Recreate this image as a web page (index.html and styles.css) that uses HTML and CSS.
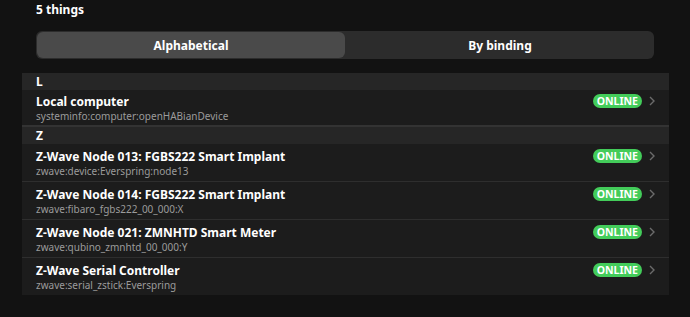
FILE: index.html
```html
<!DOCTYPE html>
<html>
<head>
<meta charset="utf-8">
<link rel="stylesheet" href="styles.css">
</head>
<body>
<div class="page">
  <div class="count">5 things</div>
  <div class="segmented">
    <div class="seg active">Alphabetical</div>
    <div class="seg">By binding</div>
  </div>
  <div class="list">
    <div class="group-header first">L</div>
    <div class="item">
      <div class="text">
        <div class="title">Local computer</div>
        <div class="sub">systeminfo:computer:openHABianDevice</div>
      </div>
      <span class="badge">ONLINE</span>
      <svg class="chev" width="6" height="10" viewBox="0 0 6 10"><path d="M1 1l4 4-4 4" fill="none" stroke="#6b6b6b" stroke-width="1.4"/></svg>
    </div>
    <div class="group-header">Z</div>
    <div class="item">
      <div class="text">
        <div class="title">Z-Wave Node 013: FGBS222 Smart Implant</div>
        <div class="sub">zwave:device:Everspring:node13</div>
      </div>
      <span class="badge">ONLINE</span>
      <svg class="chev" width="6" height="10" viewBox="0 0 6 10"><path d="M1 1l4 4-4 4" fill="none" stroke="#6b6b6b" stroke-width="1.4"/></svg>
    </div>
    <div class="item">
      <div class="text">
        <div class="title">Z-Wave Node 014: FGBS222 Smart Implant</div>
        <div class="sub">zwave:fibaro_fgbs222_00_000:X</div>
      </div>
      <span class="badge">ONLINE</span>
      <svg class="chev" width="6" height="10" viewBox="0 0 6 10"><path d="M1 1l4 4-4 4" fill="none" stroke="#6b6b6b" stroke-width="1.4"/></svg>
    </div>
    <div class="item">
      <div class="text">
        <div class="title">Z-Wave Node 021: ZMNHTD Smart Meter</div>
        <div class="sub">zwave:qubino_zmnhtd_00_000:Y</div>
      </div>
      <span class="badge">ONLINE</span>
      <svg class="chev" width="6" height="10" viewBox="0 0 6 10"><path d="M1 1l4 4-4 4" fill="none" stroke="#6b6b6b" stroke-width="1.4"/></svg>
    </div>
    <div class="item">
      <div class="text">
        <div class="title">Z-Wave Serial Controller</div>
        <div class="sub">zwave:serial_zstick:Everspring</div>
      </div>
      <span class="badge">ONLINE</span>
      <svg class="chev" width="6" height="10" viewBox="0 0 6 10"><path d="M1 1l4 4-4 4" fill="none" stroke="#6b6b6b" stroke-width="1.4"/></svg>
    </div>
  </div>
</div>
</body>
</html>
```

FILE: styles.css
```css
html, body {
  margin: 0;
  padding: 0;
  background: #121212;
}
body {
  font-family: "Noto Sans", "Open Sans", sans-serif;
  color: #ffffff;
  width: 690px;
  height: 317px;
  overflow: hidden;
}
.page {
  padding-top: 2px;
}
.count {
  font-size: 12px;
  font-weight: 700;
  line-height: 16px;
  padding-left: 36px;
}
.segmented {
  margin: 13px 36px 0 36px;
  height: 28px;
  background: #2c2c2c;
  border-radius: 6px;
  display: flex;
}
.seg {
  flex: 1;
  display: flex;
  align-items: center;
  justify-content: center;
  font-size: 12px;
  font-weight: 700;
  border-radius: 6px;
}
.seg.active {
  background: #4a4a4a;
  margin: 1px;
}
.list {
  margin: 14px 21px 0 22px;
  background: #1c1c1c;
}
.group-header {
  background: #262626;
  font-size: 12px;
  font-weight: 700;
  line-height: 17px;
  padding-left: 14px;
  border-top: 2px solid #333333;
}
.group-header.first {
  border-top: none;
}
.item {
  display: flex;
  align-items: flex-start;
  padding: 5px 14px 3px 14px;
  border-top: 1px solid #2e2e2e;
}
.group-header + .item {
  border-top: none;
}
.group-header.first + .item {
  padding: 4px 14px 2px 14px;
}
.text {
  flex: 1;
  min-width: 0;
}
.title {
  font-size: 12px;
  font-weight: 700;
  line-height: 16px;
}
.sub {
  font-size: 10px;
  color: #9b9b9b;
  line-height: 13px;
}
.badge {
  flex-shrink: 0;
  white-space: nowrap;
  background: #43cc5a;
  color: #fff;
  font-size: 10.5px;
  font-weight: 700;
  line-height: 14px;
  padding: 0 4px;
  border-radius: 7px;
}
.chev {
  flex-shrink: 0;
  margin: 2px 0 0 7px;
}
```
